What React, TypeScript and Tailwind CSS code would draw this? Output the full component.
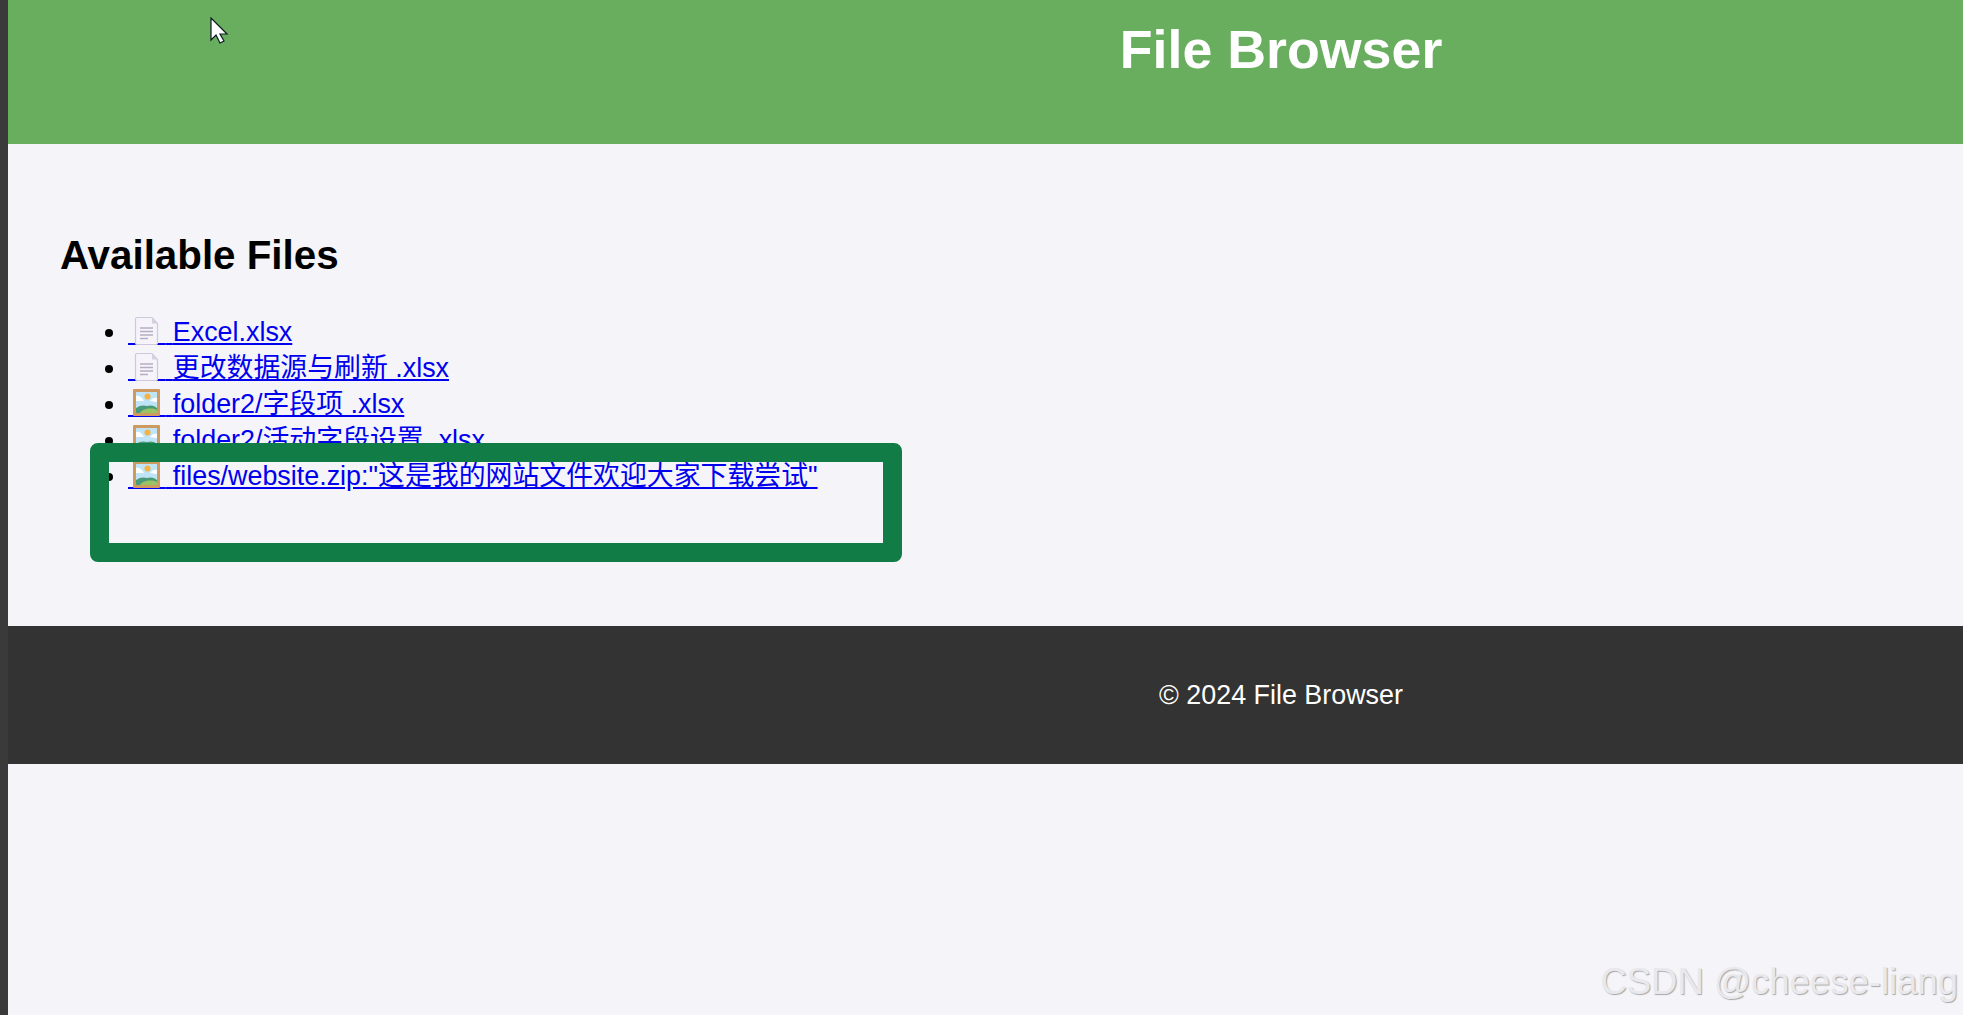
import React from 'react';

const DocIcon = () => (
  <svg viewBox="0 0 37 30" className="absolute left-0 top-[-1px] w-[37px] h-[30px]">
    <path d="M9 1.5h15l5.5 6V27a1.5 1.5 0 0 1-1.5 1.5H9A1.5 1.5 0 0 1 7.5 27V3A1.5 1.5 0 0 1 9 1.5z" fill="#f6f4fa" stroke="#cfc8dc" strokeWidth="1.2" />
    <path d="M24 1.5v6h5.5z" fill="#d6cfe0" />
    <path d="M12 12h13M12 15.5h13M12 19h13M12 22.5h8" stroke="#b5adc4" strokeWidth="1.3" />
  </svg>
);

const PicIcon = () => (
  <svg viewBox="0 0 37 30" className="absolute left-0 top-[-1px] w-[37px] h-[30px]">
    <rect x="5" y="1" width="27" height="27" rx="1" fill="#cf9a5f" />
    <rect x="8" y="4" width="21" height="21" fill="#bfe3f7" />
    <circle cx="19.5" cy="8.5" r="3" fill="#f5b23e" />
    <path d="M8 8c3-1 6 1 8 5H8zM22 13c2-3 5-4 7-3v4z" fill="#fff" />
    <path d="M8 25v-5c4-3 8-3 11-2 3-1 7-1 10 2v5z" fill="#4a9a78" />
    <path d="M12 25c2-4 11-6 17-3v3z" fill="#9ac266" />
  </svg>
);

const files = [
  { icon: 'doc', name: 'Excel.xlsx' },
  { icon: 'doc', name: '更改数据源与刷新 .xlsx' },
  { icon: 'pic', name: 'folder2/字段项 .xlsx' },
  { icon: 'pic', name: 'folder2/活动字段设置 .xlsx' },
  { icon: 'pic', name: 'files/website.zip:"这是我的网站文件欢迎大家下载尝试"' },
];

export default function App() {
  return (
    <div className="relative flex h-screen overflow-hidden bg-[#f4f4f9] text-[26.88px] text-black font-['Liberation_Sans','Noto_Sans_CJK_SC',sans-serif]">
      {/* left edge of the captured window */}
      <div className="w-2 shrink-0 bg-[#3a3a3a]" />

      {/* the page runs wider than the capture, so its centre sits right of the middle */}
      <div className="w-[2546px] shrink-0">
        <header className="h-[144px] bg-[#69ad5f] pt-[19px] text-center text-white">
          <h1 className="text-[53.76px] font-bold leading-[61px]">File Browser</h1>
        </header>

        <main className="h-[482px] pl-[52px] pt-[88px]">
          <h2 className="text-[40.32px] font-bold leading-[46px]">Available Files</h2>
          <ul className="mt-[36px] list-disc pl-[68px]">
            {files.map((f) => (
              <li key={f.name} className="h-[36px] leading-[36px]">
                <a href="#" className="text-[#0000ee] underline">
                  <span className="relative">
                    {'\u00a0\u00a0\u00a0\u00a0\u00a0'}
                    {f.icon === 'doc' ? <DocIcon /> : <PicIcon />}
                  </span>{' '}
                  {f.name}
                </a>
              </li>
            ))}
          </ul>
        </main>

        <footer className="flex h-[138px] items-center justify-center bg-[#333333] pt-[1px] text-white">
          © 2024 File Browser
        </footer>
      </div>

      {/* annotation drawn over the screenshot */}
      <div className="absolute left-[90px] top-[443px] h-[119px] w-[812px] rounded-lg border-[19px] border-[#127c46]" />

      {/* mouse pointer */}
      <svg viewBox="0 0 19 28" className="absolute left-[210px] top-[17px] h-[28px] w-[19px]">
        <path d="M1 1v22l5-5 4 8 4-2-4-7h7z" fill="#fff" stroke="#0a1a20" strokeWidth="1.2" />
      </svg>

      {/* watermark */}
      <div className="absolute right-[5px] top-[958px] text-[36.5px] leading-[48px] text-[#e9e9ed] [text-shadow:1px_1px_1px_#a8a8a8]">
        CSDN @cheese-liang
      </div>
    </div>
  );
}
